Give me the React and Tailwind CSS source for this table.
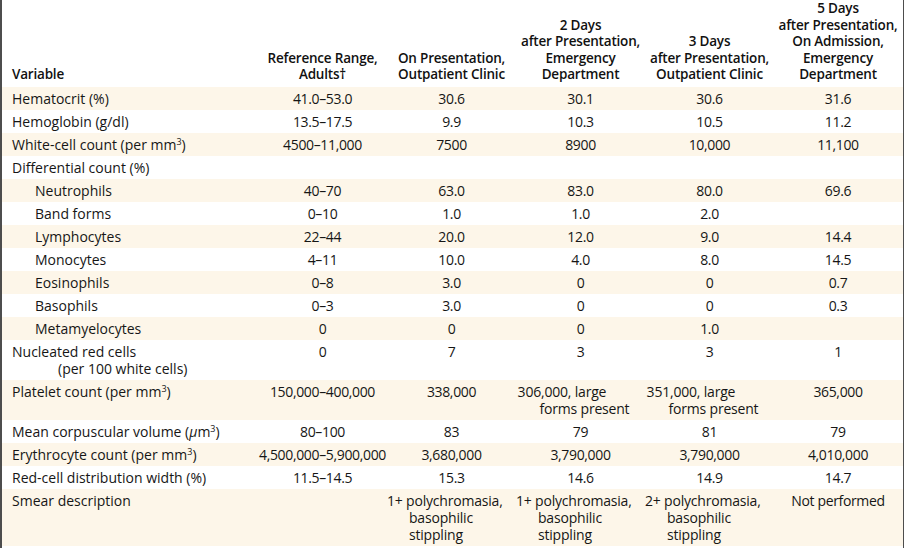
import React from "react";

const Sup = () => <sup className="text-[9px] relative -top-[5px]">3</sup>;

const rows = [
  { v: "Hematocrit (%)", d: ["41.0–53.0", "30.6", "30.1", "30.6", "31.6"] },
  { v: "Hemoglobin (g/dl)", d: ["13.5–17.5", "9.9", "10.3", "10.5", "11.2"] },
  { v: <>White-cell count (per mm<Sup />)</>, d: ["4500–11,000", "7500", "8900", "10,000", "11,100"] },
  { v: "Differential count (%)", d: ["", "", "", "", ""] },
  { v: "Neutrophils", sub: true, d: ["40–70", "63.0", "83.0", "80.0", "69.6"] },
  { v: "Band forms", sub: true, d: ["0–10", "1.0", "1.0", "2.0", ""] },
  { v: "Lymphocytes", sub: true, d: ["22–44", "20.0", "12.0", "9.0", "14.4"] },
  { v: "Monocytes", sub: true, d: ["4–11", "10.0", "4.0", "8.0", "14.5"] },
  { v: "Eosinophils", sub: true, d: ["0–8", "3.0", "0", "0", "0.7"] },
  { v: "Basophils", sub: true, d: ["0–3", "3.0", "0", "0", "0.3"] },
  { v: "Metamyelocytes", sub: true, d: ["0", "0", "0", "1.0", ""] },
  {
    v: (
      <>
        <div>Nucleated red cells</div>
        <div className="pl-[46px]">(per 100 white cells)</div>
      </>
    ),
    d: ["0", "7", "3", "3", "1"],
  },
  {
    v: <>Platelet count (per mm<Sup />)</>,
    d: ["150,000–400,000", "338,000", ["306,000, large", "forms present"], ["351,000, large", "forms present"], "365,000"],
  },
  { v: <>Mean corpuscular volume (<i>μ</i>m<Sup />)</>, d: ["80–100", "83", "79", "81", "79"] },
  { v: <>Erythrocyte count (per mm<Sup />)</>, d: ["4,500,000–5,900,000", "3,680,000", "3,790,000", "3,790,000", "4,010,000"] },
  { v: "Red-cell distribution width (%)", d: ["11.5–14.5", "15.3", "14.6", "14.9", "14.7"] },
  {
    v: "Smear description",
    d: [
      "",
      ["1+ polychromasia,", "basophilic", "stippling"],
      ["1+ polychromasia,", "basophilic", "stippling"],
      ["2+ polychromasia,", "basophilic", "stippling"],
      "Not performed",
    ],
  },
];

function Cell({ value }) {
  if (Array.isArray(value)) {
    return (
      <div className="text-center whitespace-nowrap">
        <div className="inline-block text-left mr-[14px] tracking-[-0.2px]">
          {value.map((l, i) => (
            <div key={i} className={i > 0 ? "pl-[22px]" : ""}>
              {l}
            </div>
          ))}
        </div>
      </div>
    );
  }
  return <div className="text-center whitespace-nowrap tracking-[-0.35px]">{value}</div>;
}

const cols = "grid grid-cols-[256px_129px_129px_129px_129px_128px]";

export default function App() {
  return (
    <div
      className="w-[904px] h-[548px] overflow-hidden bg-white border-l-2 border-r border-[#4d4d4d] text-[#161616] text-[14px]"
      style={{ fontFamily: '"Open Sans", "Liberation Sans", sans-serif' }}
    >
      <div className={cols + " items-end h-[87px] pb-[4px] font-semibold text-[13.5px] tracking-[-0.2px] leading-[16.6px] text-[#111] whitespace-nowrap"}>
        <div className="pl-[10px]">Variable</div>
        <div className="text-center">
          Reference Range,
          <br />
          Adults†
        </div>
        <div className="text-center">
          On Presentation,
          <br />
          Outpatient Clinic
        </div>
        <div className="text-center">
          2 Days
          <br />
          after Presentation,
          <br />
          Emergency
          <br />
          Department
        </div>
        <div className="text-center">
          3 Days
          <br />
          after Presentation,
          <br />
          Outpatient Clinic
        </div>
        <div className="text-center">
          5 Days
          <br />
          after Presentation,
          <br />
          On Admission,
          <br />
          Emergency
          <br />
          Department
        </div>
      </div>
      {rows.map((r, i) => (
        <div
          key={i}
          className={
            cols +
            " leading-[17px] py-[3px] " +
            (i % 2 === 0 ? "bg-[#fdf6e9]" : "bg-white")
          }
        >
          <div className={"whitespace-nowrap " + (r.sub ? "pl-[33px]" : "pl-[10px]")}>{r.v}</div>
          {r.d.map((c, j) => (
            <Cell key={j} value={c} />
          ))}
        </div>
      ))}
    </div>
  );
}
